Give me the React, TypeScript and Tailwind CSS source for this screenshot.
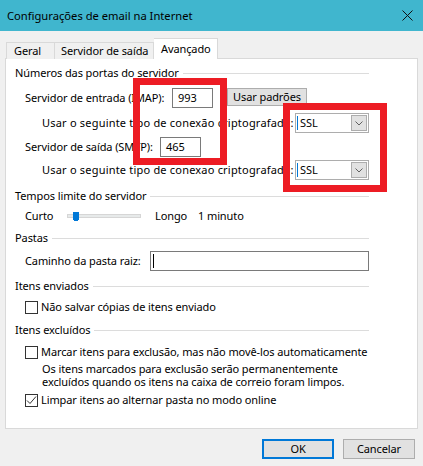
import React from "react";

function SectionHeader({ label }: { label: string }) {
  return (
    <div className="flex items-center h-[16px] w-[354px]">
      <span className="whitespace-nowrap">{label}</span>
      <div className="flex-1 h-px bg-[#dcdcdc] ml-[4px]" />
    </div>
  );
}

function Select() {
  return (
    <div className="relative w-[74px] h-[20px] border border-[#adadad] bg-white flex items-center shrink-0">
      <div className="w-px h-[14px] bg-[#0078d7] ml-[1px]" />
      <span className="ml-[2px]">SSL</span>
      <div className="absolute right-[1px] top-[1px] w-[16px] h-[16px] bg-[#e1e1e1] border border-[#adadad] flex items-center justify-center">
        <svg width="8" height="5" viewBox="0 0 8 5">
          <path d="M0.5 0.5 L4 4 L7.5 0.5" stroke="#606060" strokeWidth="1" fill="none" />
        </svg>
      </div>
    </div>
  );
}

function Checkbox({ checked }: { checked?: boolean }) {
  return (
    <div className="w-[13px] h-[13px] border border-[#333333] bg-white flex items-center justify-center shrink-0">
      {checked && (
        <svg width="11" height="11" viewBox="0 0 11 11">
          <path d="M1 5.5 L4 8.5 L10 1.5" stroke="#333333" strokeWidth="1" fill="none" />
        </svg>
      )}
    </div>
  );
}

export default function App() {
  return (
    <div
      className="relative w-[423px] h-[466px] bg-[#f0f0f0] flex flex-col text-[11px] tracking-[-0.1px] text-black overflow-hidden"
      style={{ fontFamily: '"Noto Sans", "Open Sans", sans-serif' }}
    >
      {/* Title bar */}
      <div className="h-[31px] bg-[#40b6ce] flex items-center pl-[7px] pr-[10px] shrink-0">
        <span className="text-[11.2px] tracking-normal leading-none">Configurações de email na Internet</span>
        <div className="ml-auto">
          <svg width="11" height="11" viewBox="0 0 11 11">
            <path d="M0.5 0.5 L10.5 10.5 M10.5 0.5 L0.5 10.5" stroke="#111111" strokeWidth="1" />
          </svg>
        </div>
      </div>

      {/* Tabs */}
      <div className="flex items-end h-[20px] mt-[7px] ml-[6px] relative z-10">
        <div className="h-[17px] w-[48px] border-t border-l border-[#d9d9d9] bg-[#f0f0f0] flex items-center pl-[7px] -mb-px whitespace-nowrap">
          Geral
        </div>
        <div className="h-[17px] w-[100px] border-t border-l border-r border-[#d9d9d9] bg-[#f0f0f0] flex items-center pl-[6px] -mb-px whitespace-nowrap">
          Servidor de saída
        </div>
        <div className="h-[21px] w-[64px] border-t border-r border-[#d9d9d9] bg-white flex items-start pt-[2px] pl-[7px] -mb-px whitespace-nowrap">
          Avançado
        </div>
      </div>

      {/* Panel */}
      <div className="mx-[5px] h-[371px] border border-[#d9d9d9] bg-white pl-[9px] flex flex-col shrink-0">
        <div className="mt-[6px]">
          <SectionHeader label="Números das portas do servidor" />
        </div>

        <div className="mt-[7px] h-[20px] flex items-center">
          <span className="ml-[10px] w-[147px] whitespace-nowrap">Servidor de entrada (IMAP):</span>
          <div className="w-[41px] h-[20px] border border-[#7a7a7a] flex items-center pl-[5px]">993</div>
          <div className="ml-[14px] w-[80px] h-[18px] bg-[#e1e1e1] border border-[#adadad] flex items-center justify-center self-start">
            Usar padrões
          </div>
        </div>

        <div className="mt-[5px] h-[20px] flex items-center">
          <span className="ml-[27px] w-[253px] whitespace-nowrap tracking-[0.2px]">Usar o seguinte tipo de conexão criptografada:</span>
          <Select />
        </div>

        <div className="mt-[4px] h-[20px] flex items-center">
          <span className="ml-[10px] w-[135px] whitespace-nowrap">Servidor de saída (SMTP):</span>
          <div className="w-[41px] h-[20px] border border-[#7a7a7a] flex items-center pl-[5px]">465</div>
        </div>

        <div className="mt-[3px] h-[20px] flex items-center">
          <span className="ml-[27px] w-[253px] whitespace-nowrap tracking-[0.2px]">Usar o seguinte tipo de conexao criptografada:</span>
          <Select />
        </div>

        <div className="mt-[8px]">
          <SectionHeader label="Tempos limite do servidor" />
        </div>

        <div className="mt-[4px] h-[16px] flex items-center">
          <span className="ml-[10px] w-[42px]">Curto</span>
          <div className="relative w-[74px] h-[4px] bg-[#e7eaea] border border-[#d6d6d6]">
            <div className="absolute left-[5px] top-[-3px] w-[6px] h-[8px] bg-[#0078d7]" />
            <div className="absolute left-[6px] top-[5px] w-[4px] h-px bg-[#0078d7]" />
          </div>
          <span className="ml-[14px] w-[43px]">Longo</span>
          <span>1 minuto</span>
        </div>

        <div className="mt-[6px]">
          <SectionHeader label="Pastas" />
        </div>

        <div className="mt-[5px] h-[20px] flex items-center">
          <span className="ml-[10px] w-[125px] whitespace-nowrap">Caminho da pasta raiz:</span>
          <div className="w-[219px] h-[20px] border border-[#7a7a7a] flex items-center pl-[2px]">
            <div className="w-px h-[14px] bg-black" />
          </div>
        </div>

        <div className="mt-[7px]">
          <SectionHeader label="Itens enviados" />
        </div>

        <div className="mt-[5px] h-[16px] flex items-center ml-[10px]">
          <Checkbox />
          <span className="ml-[3px] whitespace-nowrap">Não salvar cópias de itens enviado</span>
        </div>

        <div className="mt-[7px]">
          <SectionHeader label="Itens excluídos" />
        </div>

        <div className="mt-[6px] h-[16px] flex items-center ml-[10px]">
          <Checkbox />
          <span className="ml-[3px] whitespace-nowrap">Marcar itens para exclusão, mas não movê-los automaticamente</span>
        </div>

        <div className="mt-[3px] ml-[27px] flex flex-col">
          <div className="h-[13px] flex items-center whitespace-nowrap">Os itens marcados para exclusão serão permanentemente</div>
          <div className="h-[13px] flex items-center whitespace-nowrap">excluídos quando os itens na caixa de correio foram limpos.</div>
        </div>

        <div className="mt-[3px] h-[16px] flex items-center ml-[10px]">
          <Checkbox checked />
          <span className="ml-[3px] whitespace-nowrap">Limpar itens ao alternar pasta no modo online</span>
        </div>
      </div>

      {/* Footer */}
      <div className="mt-[10px] flex justify-end gap-[9px] pr-[8px]">
        <div className="w-[72px] h-[20px] bg-[#e1e1e1] border-2 border-[#0078d7] flex items-center justify-center">
          OK
        </div>
        <div className="w-[72px] h-[20px] bg-[#e1e1e1] border border-[#adadad] flex items-center justify-center">
          Cancelar
        </div>
      </div>

      {/* Red annotation boxes */}
      <div className="absolute left-[133px] top-[78px] w-[94px] h-[87px] border-[7px] border-[#ed1c24] pointer-events-none" />
      <div className="absolute left-[283px] top-[103px] w-[104px] h-[89px] border-[7px] border-[#ed1c24] pointer-events-none" />
    </div>
  );
}
